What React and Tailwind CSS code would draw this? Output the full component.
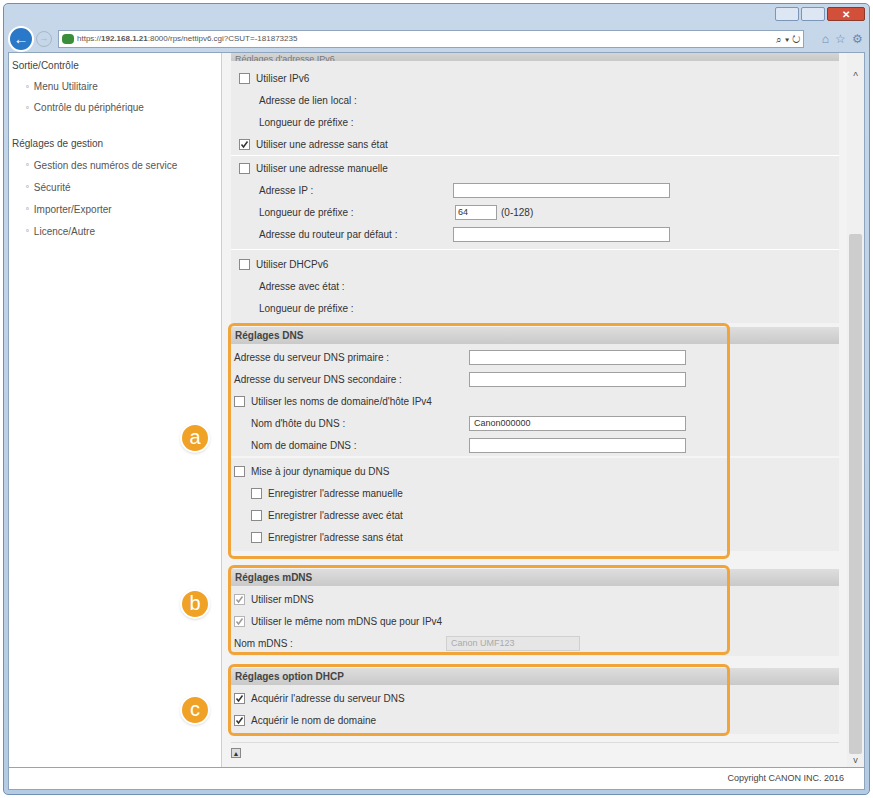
const F = "font-[Liberation_Sans,Arial,sans-serif]";

function Cb({ checked, dim }) {
  return (
    <span className={`mr-[6px] inline-flex h-[11px] w-[11px] shrink-0 items-center justify-center border ${dim ? "border-[#b5b5b5]" : "border-[#8a8a8a]"} bg-white`}>
      {checked && (
        <svg width="9" height="9" viewBox="0 0 9 9">
          <path d="M1.5 4.5 L3.5 7 L7.5 1.5" stroke={dim ? "#9a9a9a" : "#333"} strokeWidth="1.5" fill="none" />
        </svg>
      )}
    </span>
  );
}

function Row({ children, className = "" }) {
  return <div className={`flex h-[22px] items-center text-[10px] text-[#333] ${className}`}>{children}</div>;
}

function Field({ label, indent, labelW, input, w = "w-[217px]", value, disabled }) {
  return (
    <Row className={indent}>
      <span className={labelW}>{label}</span>
      {input !== false && (
        <span className={`h-[15px] ${w} border ${disabled ? "border-[#d0d0d0] bg-[#e6e6e6] text-[#aaa]" : "border-[#a0a0a0] bg-white"} px-1 text-[9px] leading-[13px]`}>{value}</span>
      )}
    </Row>
  );
}

function Header({ children }) {
  return (
    <div className="flex h-[17px] items-center bg-gradient-to-b from-[#dedede] to-[#c9c9c9] px-[4px] text-[10px] font-bold text-[#444]">
      {children}
    </div>
  );
}

function Badge({ l }) {
  return (
    <div className="flex h-[30px] w-[30px] items-center justify-center rounded-full border-2 border-white bg-[#f0a226] pb-[2px] text-[20px] text-white shadow">
      {l}
    </div>
  );
}

export default function App() {
  return (
    <div className={`${F} h-[798px] w-[873px] bg-white p-[3px]`}>
      <div className="flex h-full flex-col rounded-[5px] border border-[#6f8fb3] bg-gradient-to-b from-[#c6d7ea] to-[#b4cbe3]">
        {/* title bar */}
        <div className="flex h-[22px] items-start justify-end gap-[2px] pr-[4px] pt-[3px]">
          <div className="h-[14px] w-[24px] rounded-[2px] border border-[#7b96b8] bg-[#dce7f3]" />
          <div className="h-[14px] w-[24px] rounded-[2px] border border-[#7b96b8] bg-[#dce7f3]" />
          <div className="flex h-[14px] w-[38px] items-center justify-center rounded-[2px] border border-[#8a3a2a] bg-[#d2503a] text-[10px] font-bold text-white">✕</div>
        </div>
        {/* address row */}
        <div className="flex h-[26px] items-center px-[4px]">
          <div className="flex h-[26px] w-[26px] items-center justify-center rounded-full border-2 border-white bg-[#2a78c8] text-[15px] font-bold text-white">←</div>
          <div className="ml-[2px] flex h-[16px] w-[16px] items-center justify-center rounded-full border border-[#a8b8c8] text-[9px] text-[#a8b8c8]">→</div>
          <div className="ml-[6px] flex h-[18px] flex-1 items-center border border-[#8fa5bd] bg-white px-[3px] text-[8px] text-[#555]">
            <span className="mr-[3px] h-[10px] w-[12px] rounded-sm bg-[#3a8e3a]" />
            https://<b>192.168.1.21</b>:8000/rps/nettipv6.cgi?CSUT=-181873235
            <span className="ml-auto text-[10px] text-[#444]">⌕ ▾ ↻</span>
          </div>
          <div className="ml-[18px] flex gap-[6px] pr-[2px] text-[12px] text-[#6b8ab0]">
            <span>⌂</span><span>☆</span><span>⚙</span>
          </div>
        </div>
        {/* content */}
        <div className="mx-[4px] flex min-h-0 flex-1 border border-[#8fa5bd] bg-white">
          <div className="w-[213px] shrink-0 border-r border-[#cfcfcf] pt-[2px] text-[10px] text-[#444]">
            <div className="flex h-[21px] items-center pl-[3px]">Sortie/Contrôle</div>
            {["Menu Utilitaire", "Contrôle du périphérique"].map((t) => (
              <div key={t} className="flex h-[21px] items-center pl-[17px] text-[#555]"><span className="mr-[5px] text-[8px]">▫</span>{t}</div>
            ))}
            <div className="mt-[15px] flex h-[21px] items-center pl-[3px]">Réglages de gestion</div>
            {["Gestion des numéros de service", "Sécurité", "Importer/Exporter", "Licence/Autre"].map((t) => (
              <div key={t} className="flex h-[22px] items-center pl-[17px] text-[#555]"><span className="mr-[5px] text-[8px]">▫</span>{t}</div>
            ))}
          </div>
          <div className="flex min-w-0 flex-1 flex-col">
            <div className="flex min-h-0 flex-1">
              <div className="flex min-w-0 flex-1 flex-col bg-[#f3f3f3] pl-[9px] pr-[8px]">
                <div className="flex h-[8px] items-end overflow-hidden bg-gradient-to-b from-[#d5d5d5] to-[#c9c9c9] px-[4px]">
                  <span className="-mb-[3px] text-[9px] leading-[10px] text-[#777]">Réglages d'adresse IPv6</span>
                </div>
                <div className="bg-[#ececec] pt-[6px]">
                  <Row className="pl-[8px]"><Cb />Utiliser IPv6</Row>
                  <Field label="Adresse de lien local :" indent="pl-[28px]" input={false} />
                  <Field label="Longueur de préfixe :" indent="pl-[28px]" input={false} />
                  <Row className="pl-[8px]"><Cb checked />Utiliser une adresse sans état</Row>
                </div>
                <div className="h-[1px] bg-white" />
                <div className="bg-[#ececec] pb-[4px] pt-[1px]">
                  <Row className="pl-[8px]"><Cb />Utiliser une adresse manuelle</Row>
                  <Field label="Adresse IP :" indent="pl-[28px]" labelW="w-[194px]" />
                  <Row className="pl-[28px]"><span className="w-[196px]">Longueur de préfixe :</span><span className="h-[15px] w-[42px] border border-[#a0a0a0] bg-white px-[2px] text-[9px] leading-[13px]">64</span><span className="ml-[4px]">(0-128)</span></Row>
                  <Field label="Adresse du routeur par défaut :" indent="pl-[28px]" labelW="w-[194px]" />
                </div>
                <div className="h-[1px] bg-white" />
                <div className="bg-[#ececec] pb-[4px] pt-[3px]">
                  <Row className="pl-[8px]"><Cb />Utiliser DHCPv6</Row>
                  <Field label="Adresse avec état :" indent="pl-[28px]" input={false} />
                  <Field label="Longueur de préfixe :" indent="pl-[28px]" input={false} />
                </div>

                {/* DNS */}
                <div className="relative mt-[4px]">
                  <div className="absolute -left-[51px] top-[96px]"><Badge l="a" /></div>
                  <div className="absolute -left-[3px] -top-[4px] h-[236px] w-[502px] rounded-[6px] border-[3px] border-[#f0a43a]" />
                  <Header>Réglages DNS</Header>
                  <div className="bg-[#ececec] pt-[2px]">
                    <Field label="Adresse du serveur DNS primaire :" indent="pl-[3px]" labelW="w-[235px]" />
                    <Field label="Adresse du serveur DNS secondaire :" indent="pl-[3px]" labelW="w-[235px]" />
                    <Row className="pl-[3px]"><Cb />Utiliser les noms de domaine/d'hôte IPv4</Row>
                    <Field label="Nom d'hôte du DNS :" indent="pl-[20px]" labelW="w-[218px]" value="Canon000000" />
                    <Field label="Nom de domaine DNS :" indent="pl-[20px]" labelW="w-[218px]" />
                  </div>
                  <div className="h-[2px] bg-[#f5f5f5]" />
                  <div className="bg-[#ececec] pb-[3px] pt-[2px]">
                    <Row className="pl-[3px]"><Cb />Mise à jour dynamique du DNS</Row>
                    <Row className="pl-[20px]"><Cb />Enregistrer l'adresse manuelle</Row>
                    <Row className="pl-[20px]"><Cb />Enregistrer l'adresse avec état</Row>
                    <Row className="pl-[20px]"><Cb />Enregistrer l'adresse sans état</Row>
                  </div>
                </div>

                {/* mDNS */}
                <div className="relative mt-[18px]">
                  <div className="absolute -left-[51px] top-[20px]"><Badge l="b" /></div>
                  <div className="absolute -left-[3px] -top-[4px] h-[90px] w-[502px] rounded-[6px] border-[3px] border-[#f0a43a]" />
                  <Header>Réglages mDNS</Header>
                  <div className="bg-[#ececec] pb-[2px] pt-[2px]">
                    <Row className="pl-[3px]"><Cb checked dim />Utiliser mDNS</Row>
                    <Row className="pl-[3px]"><Cb checked dim />Utiliser le même nom mDNS que pour IPv4</Row>
                    <Field label="Nom mDNS :" indent="pl-[3px]" labelW="w-[212px]" w="w-[134px]" value="Canon UMF123" disabled />
                  </div>
                </div>

                {/* DHCP */}
                <div className="relative mt-[12px]">
                  <div className="absolute -left-[51px] top-[27px]"><Badge l="c" /></div>
                  <div className="absolute -left-[3px] -top-[4px] h-[72px] w-[502px] rounded-[6px] border-[3px] border-[#f0a43a]" />
                  <Header>Réglages option DHCP</Header>
                  <div className="bg-[#ececec] pb-[3px] pt-[2px]">
                    <Row className="pl-[3px]"><Cb checked />Acquérir l'adresse du serveur DNS</Row>
                    <Row className="pl-[3px]"><Cb checked />Acquérir le nom de domaine</Row>
                  </div>
                </div>
                <div className="mt-[8px] h-[1px] bg-[#dcdcdc]" />
                <div className="mt-[5px] flex h-[10px] w-[10px] items-center justify-center border border-[#888] bg-[#ddd] text-[7px] leading-none text-[#333]">▲</div>
              </div>
              {/* scrollbar */}
              <div className="flex w-[17px] shrink-0 flex-col items-center bg-[#f0f0f0]">
                <span className="mt-[16px] text-[10px] text-[#555]">^</span>
                <div className="mt-[150px] h-[520px] w-[13px] rounded-[2px] bg-[#cdcdcd]" />
                <span className="mt-auto text-[9px] text-[#555]">v</span>
              </div>
            </div>
          </div>
        </div>
        {/* status */}
        <div className="mx-[4px] mb-[4px] flex h-[22px] items-center justify-end border-x border-b border-[#8fa5bd] bg-white pr-[20px] text-[9px] text-[#444]">
          Copyright CANON INC. 2016
        </div>
      </div>
    </div>
  );
}
